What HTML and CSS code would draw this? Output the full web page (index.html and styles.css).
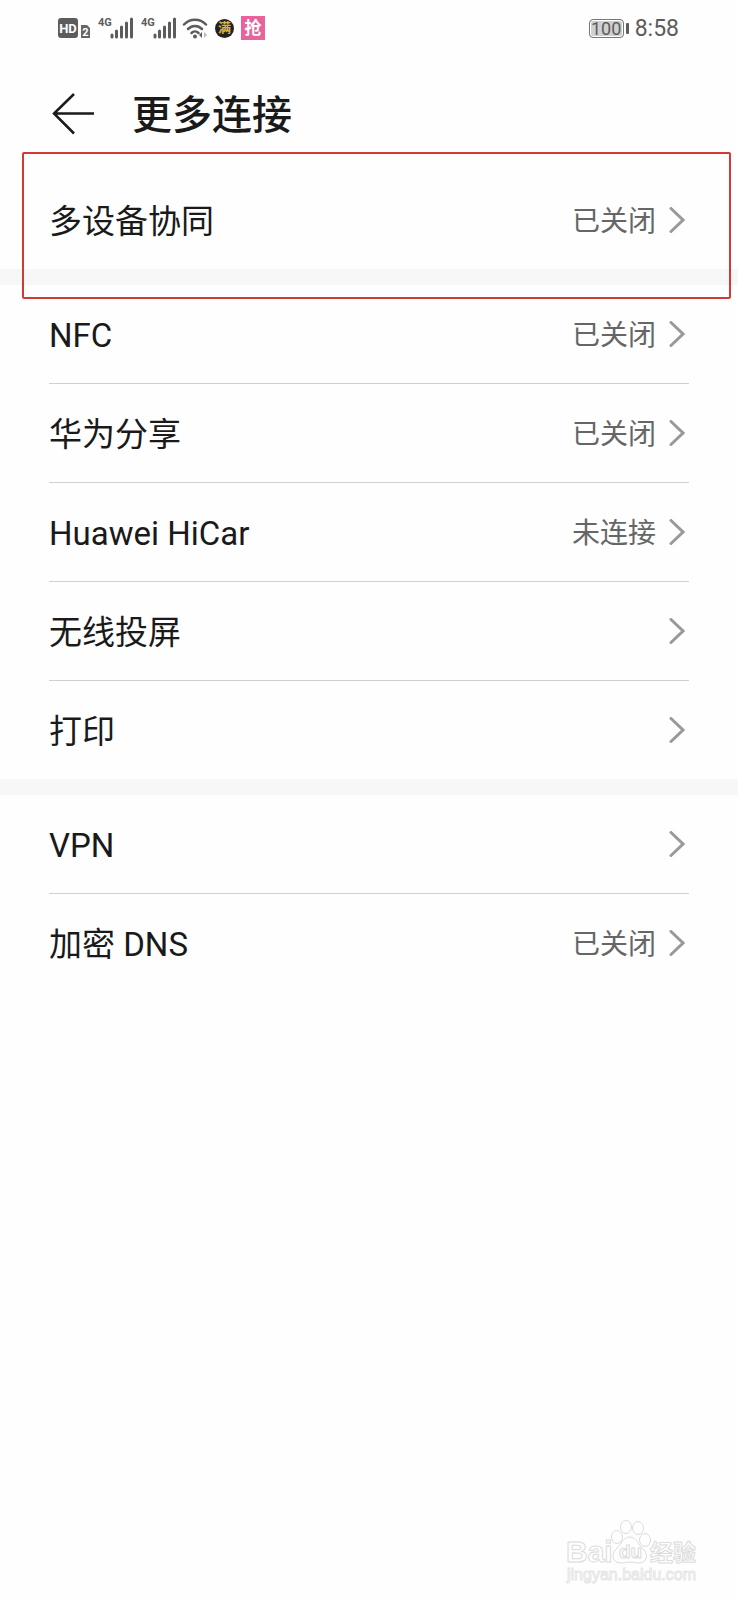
FILE: index.html
```
<!DOCTYPE html>
<html lang="zh-CN">
	<head>
		<meta charset="utf-8" />
		<meta name="viewport" content="width=device-width, initial-scale=1">
		<title>更多连接</title>
		<link rel="stylesheet" href="styles.css">
	</head>
	<body>
		<!-- 状态栏 -->
		<div class="status">
			<div class="status-left">
				<svg width="34" height="24" viewBox="0 0 34 24">
					<rect x="1" y="2" width="20" height="20" rx="3" fill="#5c5c5c"/>
					<text x="11" y="17" class="hd" text-anchor="middle">HD</text>
					<path d="M24 9h6l3 3v10h-9z" fill="#666"/>
					<text x="28.500" y="20" class="sim" text-anchor="middle">2</text>
				</svg>
				<svg class="signal" width="36" height="24" viewBox="0 0 36 24">
					<text x="0" y="10" class="net">4G</text>
					<path d="M14 19v2M18.500 15v6M23.500 11v10M28.500 7v14M33.500 3v18" stroke="#5c5c5c" stroke-width="3" stroke-linecap="round"/>
				</svg>
				<svg class="signal" width="36" height="24" viewBox="0 0 36 24">
					<text x="0" y="10" class="net">4G</text>
					<path d="M14 19v2M18.500 15v6M23.500 11v10M28.500 7v14M33.500 3v18" stroke="#5c5c5c" stroke-width="3" stroke-linecap="round"/>
				</svg>
				<svg class="wifi" width="26" height="24" viewBox="0 0 26 24">
					<path d="M2 8.500c6-6.500 16-6.500 22 0M6 13c4-4 10-4 14 0M9.500 17c2-2 5-2 7 0" fill="none" stroke="#5c5c5c" stroke-width="2.500" stroke-linecap="round"/>
					<circle cx="13" cy="20.500" r="2" fill="#5c5c5c"/>
					<path d="M20 16v6l-3-3z" fill="#5c5c5c"/>
					<path d="M22 16v6l3-3z" fill="#bbb"/>
				</svg>
				<span class="app-round">满</span>
				<span class="app-square">抢</span>
			</div>
			<div class="status-right">
				<span class="battery">100</span>
				<span class="battery-tip"></span>
				<span class="time">8:58</span>
			</div>
		</div>
		<!-- 标题 -->
		<div class="header">
			<button class="back" type="button" aria-label="返回">
				<svg width="42" height="42" viewBox="0 0 42 42"><path d="M22 1L2 20.500l20 20M2 20.500h40" fill="none" stroke="#1a1a1a" stroke-width="2.500"/></svg>
			</button>
			<h1>更多连接</h1>
		</div>
		<!-- 列表 -->
		<ul class="group first">
			<li><a href="#"><span class="name">多设备协同</span><span class="value">已关闭</span><svg class="arrow" viewBox="0 0 16 26"><path d="M2 1.500L14 13 2 24.500"/></svg></a></li>
		</ul>
		<ul class="group">
			<li><a href="#"><span class="name">NFC</span><span class="value">已关闭</span><svg class="arrow" viewBox="0 0 16 26"><path d="M2 1.500L14 13 2 24.500"/></svg></a></li>
			<li><a href="#"><span class="name">华为分享</span><span class="value">已关闭</span><svg class="arrow" viewBox="0 0 16 26"><path d="M2 1.500L14 13 2 24.500"/></svg></a></li>
			<li><a href="#"><span class="name">Huawei HiCar</span><span class="value">未连接</span><svg class="arrow" viewBox="0 0 16 26"><path d="M2 1.500L14 13 2 24.500"/></svg></a></li>
			<li><a href="#"><span class="name">无线投屏</span><svg class="arrow" viewBox="0 0 16 26"><path d="M2 1.500L14 13 2 24.500"/></svg></a></li>
			<li><a href="#"><span class="name">打印</span><svg class="arrow" viewBox="0 0 16 26"><path d="M2 1.500L14 13 2 24.500"/></svg></a></li>
		</ul>
		<ul class="group">
			<li><a href="#"><span class="name">VPN</span><svg class="arrow" viewBox="0 0 16 26"><path d="M2 1.500L14 13 2 24.500"/></svg></a></li>
			<li><a href="#"><span class="name">加密 DNS</span><span class="value">已关闭</span><svg class="arrow" viewBox="0 0 16 26"><path d="M2 1.500L14 13 2 24.500"/></svg></a></li>
		</ul>
		<!-- 水印 -->
		<div class="footer">
			<svg class="mark" width="136" height="70" viewBox="0 0 136 70">
				<text x="1" y="44" class="mark-bai">Bai</text>
				<ellipse cx="52" cy="19" rx="5.500" ry="6.500"/>
				<ellipse cx="61" cy="9" rx="5.500" ry="6.500"/>
				<ellipse cx="73" cy="10" rx="5.500" ry="6.500"/>
				<ellipse cx="80" cy="22" rx="5.500" ry="6.500"/>
				<path d="M65 19c7 0 8 8 13 12 6 5 4 14-4 14-4 0-6-1-9-1s-5 1-9 1c-9 0-10-9-5-14 5-4 7-12 14-12z"/>
				<text x="54" y="40" class="mark-du">du</text>
				<text x="85" y="43" class="mark-cn">经验</text>
				<text x="2" y="62" class="mark-url">jingyan.baidu.com</text>
			</svg>
		</div>
	</body>
</html>
```
FILE: styles.css
```
html,body,ul,li,h1{
	margin: 0;
	padding: 0;
}
ul,li{
	list-style: none;
}
a{
	text-decoration: none;
	color: inherit;
}
body{
	display: flex;
	flex-direction: column;
	min-height: 100vh;
	background: #fefefe;
	color: #1a1a1a;
	font-family: Roboto, "Noto Sans CJK SC", sans-serif;
}
svg{
	display: block;
	flex: none;
}
/* 状态栏 */
.status{
	display: flex;
	justify-content: space-between;
	align-items: center;
	height: 56px;
	padding: 0 59px 0 57px;
	color: #5c5c5c;
}
.status-left,.status-right{
	display: flex;
	align-items: center;
}
.signal{
	margin-left: 7px;
}
.wifi{
	margin-left: 5px;
}
.hd{
	font: bold 13px Roboto, sans-serif;
	fill: #fff;
}
.sim{
	font: bold 11px Roboto, sans-serif;
	fill: #fff;
}
.net{
	font: bold 11px Roboto, sans-serif;
	fill: #5c5c5c;
}
.app-round,.app-square{
	text-align: center;
	font-weight: bold;
}
.app-round{
	width: 19px;
	height: 19px;
	margin-left: 7px;
	border-radius: 50%;
	background: #222;
	color: #d9b44a;
	font-size: 13px;
	line-height: 18px;
}
.app-square{
	width: 24px;
	height: 24px;
	margin-left: 7px;
	background: #e8629c;
	color: #fff;
	font-size: 17px;
	line-height: 24px;
}
.battery{
	width: 33px;
	height: 17px;
	border: 1px solid #777;
	border-radius: 4px;
	background: #d0d0d0;
	box-shadow: inset 0 0 0 1px #fff;
	font-size: 18px;
	line-height: 18px;
	text-align: center;
}
.battery-tip{
	width: 3px;
	height: 11px;
	margin-left: 2px;
	border-radius: 1px;
	background: #5c5c5c;
}
.time{
	margin-left: 6px;
	font-size: 23px;
}
/* 标题 */
.header{
	display: flex;
	align-items: center;
	height: 115px;
	padding: 0 52px;
}
.back{
	padding: 0;
	border: 0;
	background: none;
	cursor: pointer;
}
.header h1{
	margin-left: 38px;
	padding-top: 4px;
	font-size: 40px;
	font-weight: 500;
	line-height: 60px;
}
/* 列表 */
.group{
	padding: 0 49px;
}
.group + .group{
	border-top: 16px solid #f7f7f7;
}
.group li + li{
	border-top: 1px solid #d0d0d0;
}
.group a{
	display: flex;
	align-items: center;
	height: 98px;
}
.name,.value{
	padding-top: 3px;
	line-height: 48px;
}
.name{
	flex: 1;
	font-size: 33px;
}
.value{
	color: #666;
	font-size: 28px;
}
.arrow{
	width: 16px;
	height: 26px;
	margin: 0 4px 0 13px;
	fill: none;
	stroke: #999;
	stroke-width: 3;
	stroke-linecap: round;
}
/* 红框 */
.first{
	position: relative;
}
.first::after{
	content: "";
	position: absolute;
	top: -19px;
	right: 7px;
	bottom: -30px;
	left: 22px;
	border: 2px solid #d23a34;
	border-radius: 2px;
	pointer-events: none;
}
/* 水印 */
.footer{
	display: flex;
	justify-content: flex-end;
	margin-top: auto;
	padding: 0 37px 12px 0;
}
.mark{
	fill: #fefefe;
	stroke: #dcdcdc;
	stroke-width: 1;
}
.mark-bai{
	font: bold 30px "Liberation Sans", sans-serif;
}
.mark-du{
	font: bold 19px "Liberation Sans", sans-serif;
}
.mark-cn{
	font: bold 23px "Noto Sans CJK SC", sans-serif;
}
.mark-url{
	font: 16px "Liberation Sans", sans-serif;
	stroke: #e6e6e6;
}
```
